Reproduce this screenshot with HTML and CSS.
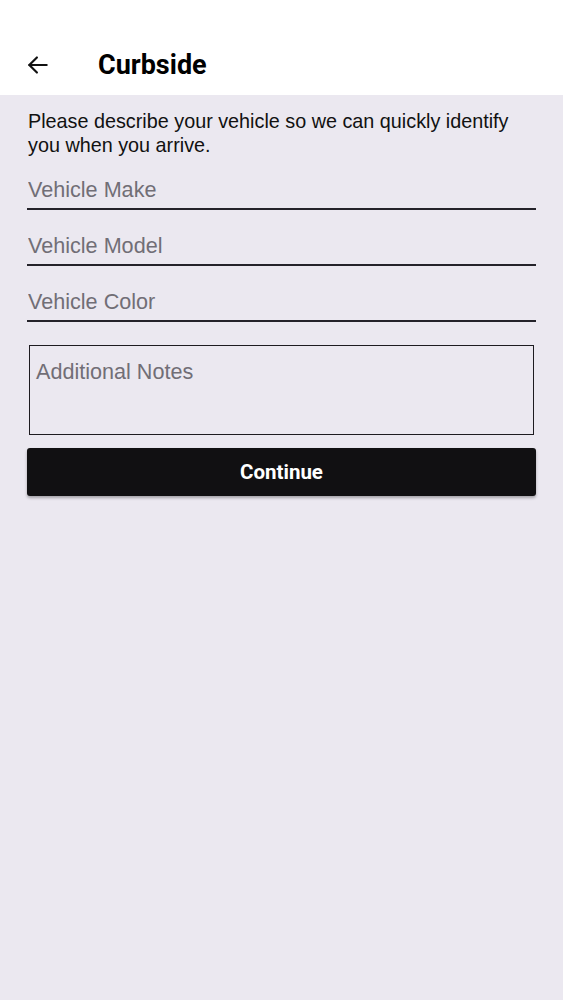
FILE: index.html
```html
<!DOCTYPE html>
<html lang="en">
<head>
<meta charset="utf-8">
<title>Curbside</title>
<link rel="stylesheet" href="styles.css">
</head>
<body>
<header class="topbar">
  <button class="back" aria-label="Back">
    <svg width="26" height="26" viewBox="0 0 24 24" fill="none" stroke="#111" stroke-width="2" stroke-linecap="round" stroke-linejoin="round"><path d="M20 12H4"/><path d="M11 5l-7 7 7 7"/></svg>
  </button>
  <h1 class="title">Curbside</h1>
</header>
<main class="content">
  <p class="intro">Please describe your vehicle so we can quickly identify you when you arrive.</p>
  <label class="field"><input type="text" placeholder="Vehicle Make"></label>
  <label class="field"><input type="text" placeholder="Vehicle Model"></label>
  <label class="field"><input type="text" placeholder="Vehicle Color"></label>
  <textarea class="notes" placeholder="Additional Notes"></textarea>
  <button class="continue">Continue</button>
</main>
</body>
</html>
```
FILE: styles.css
```css
* { box-sizing: border-box; }
html, body {
  margin: 0;
  height: 100%;
}
body {
  background: #ebe8f0;
  font-family: "Liberation Sans", Arial, sans-serif;
  color: #111;
  display: flex;
  flex-direction: column;
}
.topbar {
  background: #fff;
  height: 95px;
  display: flex;
  align-items: center;
  padding: 35px 0 0 24px;
}
.back {
  border: 0;
  background: none;
  padding: 0;
  width: 28px;
  height: 28px;
  display: flex;
  align-items: center;
  justify-content: center;
}
.title {
  margin: 0 0 0 46px;
  font-family: Roboto, "Liberation Sans", sans-serif;
  font-weight: 700;
  font-size: 27px;
  line-height: 32px;
  color: #000;
}
.content {
  flex: 1;
  padding: 14px 27px 0 27px;
  display: flex;
  flex-direction: column;
}
.intro {
  margin: 0 0 0 1px;
  font-size: 19.8px;
  line-height: 24px;
  color: #111;
}
.field {
  display: flex;
  align-items: flex-end;
  height: 56px;
  border-bottom: 2px solid #24222a;
  padding-bottom: 6px;
}
.field:first-of-type { height: 53px; }
.field input {
  width: 100%;
  border: 0;
  background: transparent;
  padding: 0 0 0 1px;
  font-family: inherit;
  font-size: 21.6px;
  line-height: 24px;
  height: 24px;
  color: #111;
  outline: none;
}
.field input::placeholder,
.notes::placeholder {
  color: #716e76;
  opacity: 1;
}
.notes {
  margin: 23px 2px 0 2px;
  height: 90px;
  border: 1.5px solid #1d1b20;
  background: transparent;
  resize: none;
  padding: 13px 6px;
  font-family: inherit;
  font-size: 21.6px;
  line-height: 26px;
  outline: none;
}
.continue {
  margin-top: 13px;
  height: 48px;
  border: 0;
  border-radius: 3px;
  background: #111012;
  color: #fff;
  font-family: Roboto, "Liberation Sans", sans-serif;
  font-weight: 700;
  font-size: 20.5px;
  box-shadow: 0 2px 3px rgba(0,0,0,0.3);
}
```
